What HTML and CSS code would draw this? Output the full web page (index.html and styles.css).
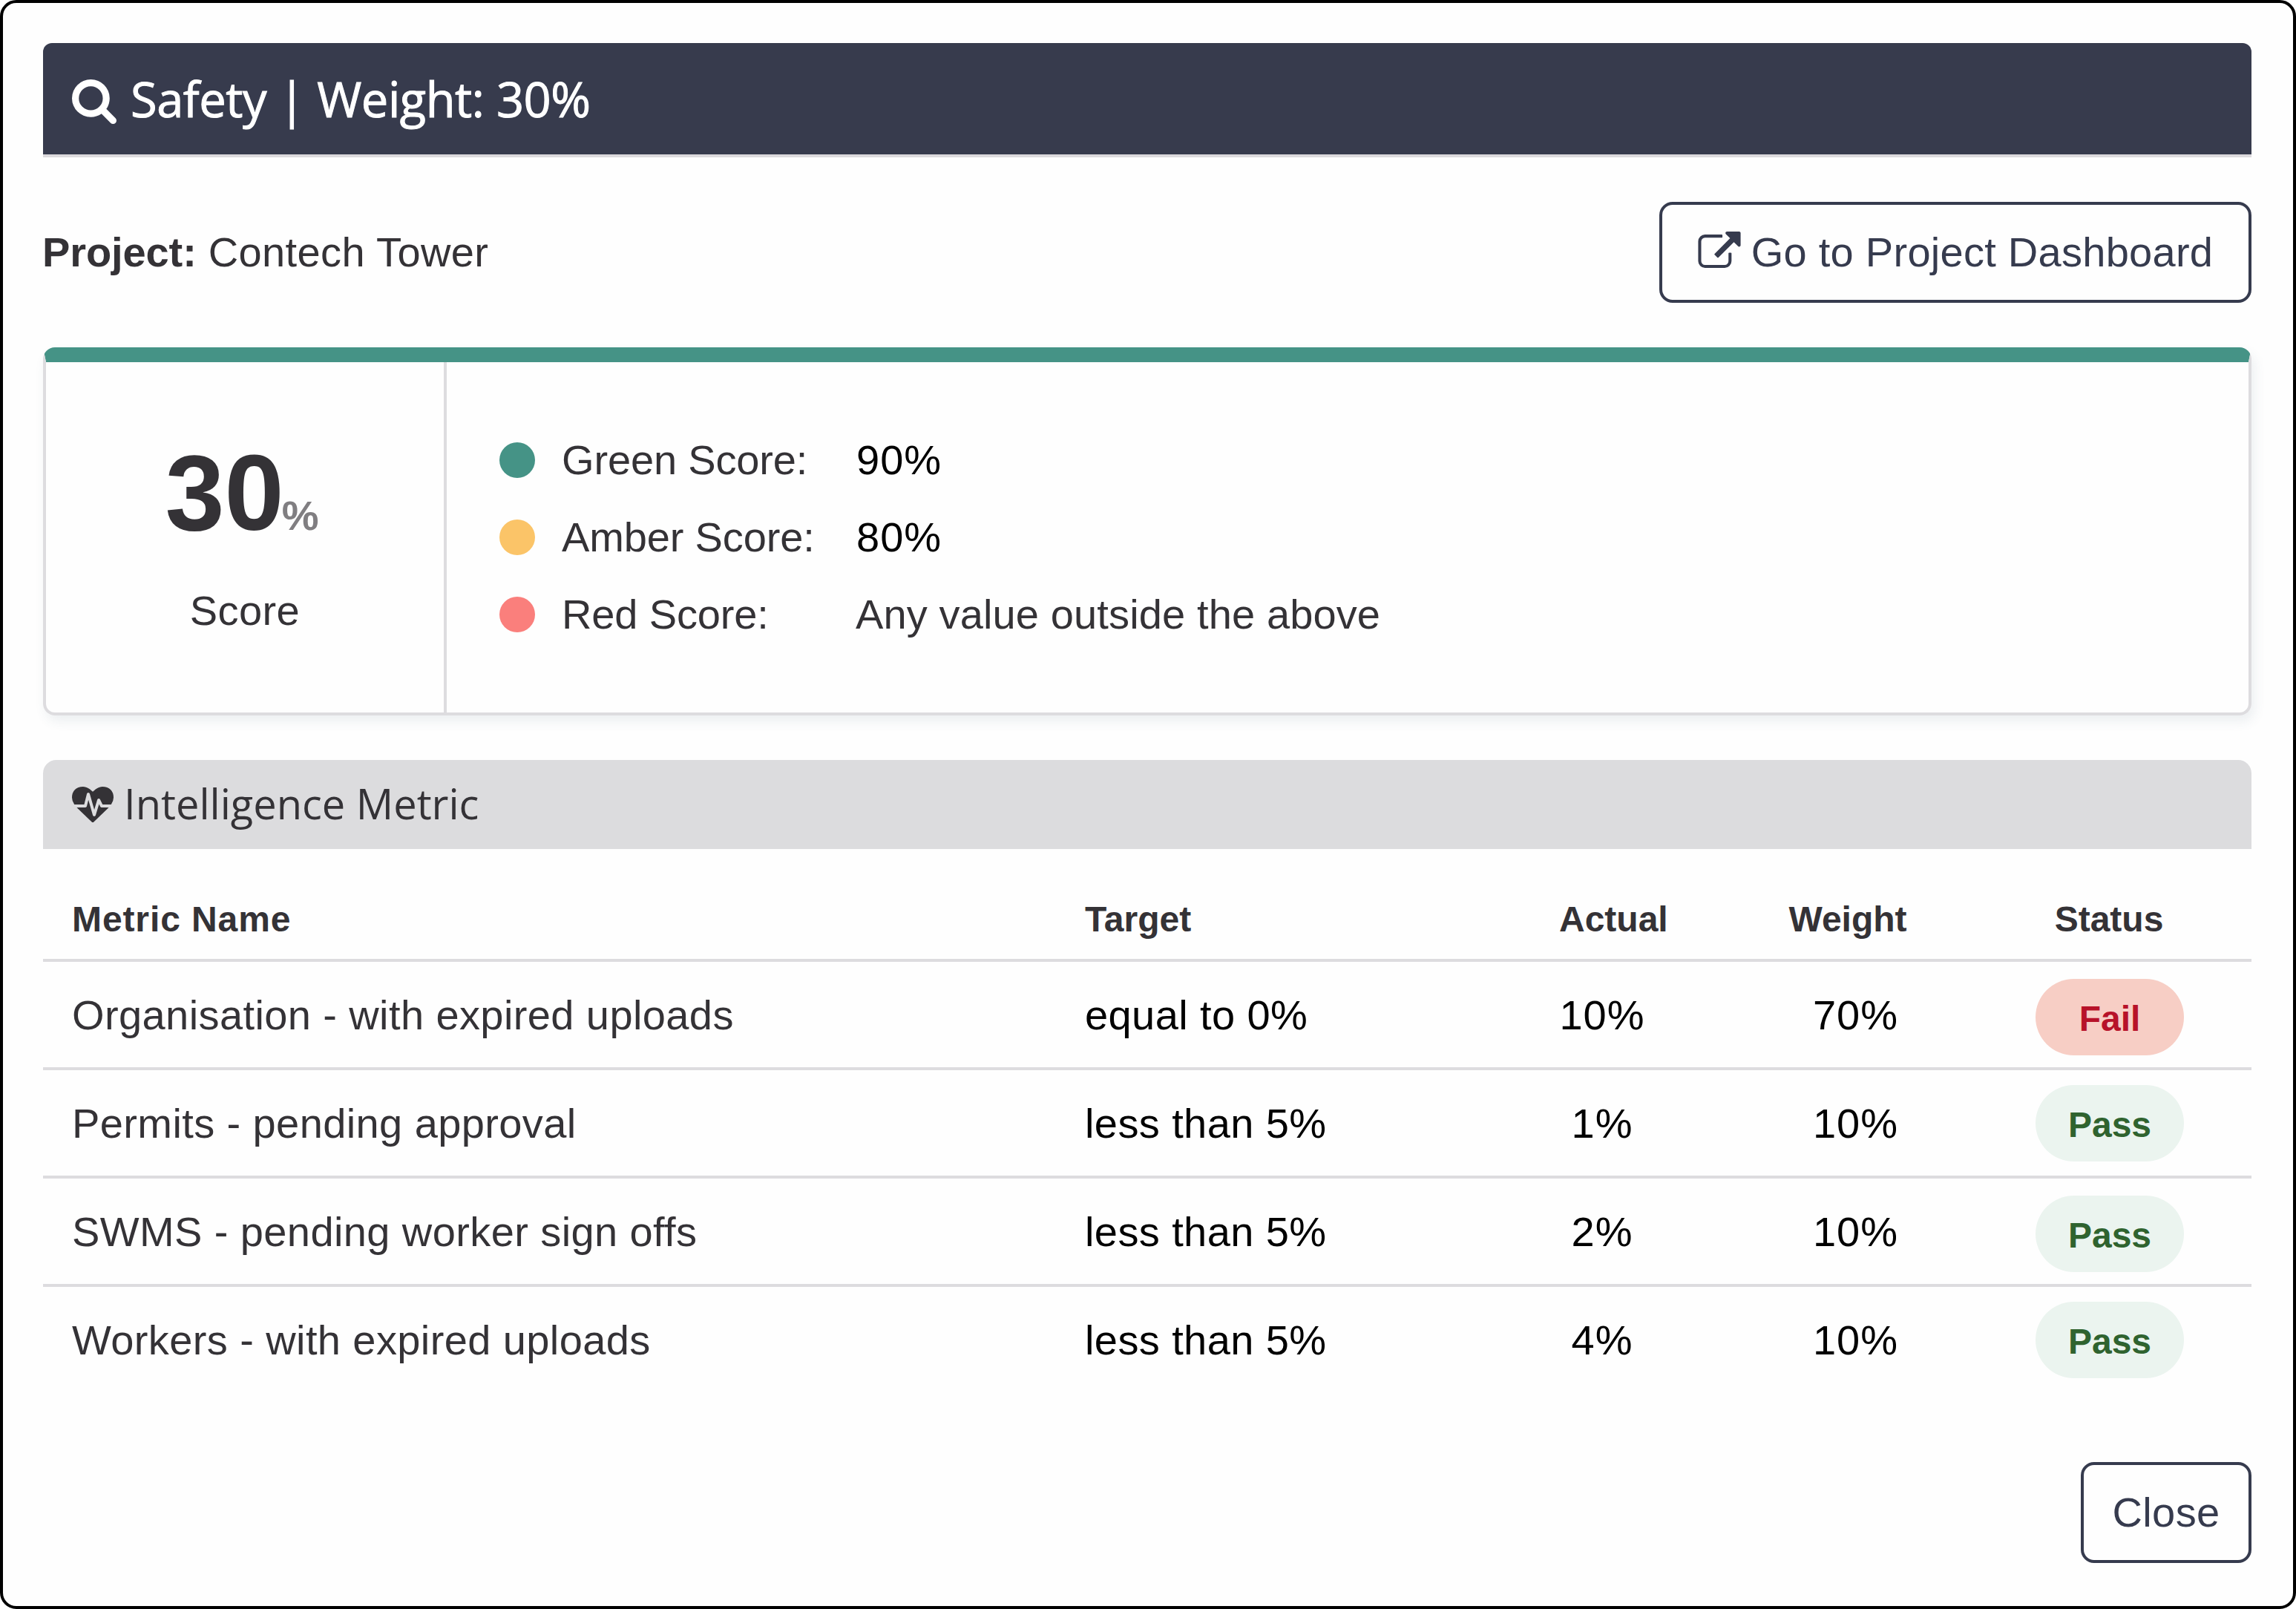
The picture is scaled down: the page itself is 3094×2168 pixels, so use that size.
FILE: index.html
```html
<!DOCTYPE html>
<html lang="en">
<head>
<meta charset="utf-8">
<title>Safety | Weight: 30%</title>
<link rel="stylesheet" href="styles.css">
</head>
<body>
<main class="dialog">
  <header class="dialog-header">
    <svg class="icon-search" viewBox="64 128 1664 1664" aria-hidden="true"><path d="M1216 832q0-185-131.500-316.500t-316.500-131.500-316.500 131.500-131.500 316.500 131.500 316.500 316.500 131.500 316.500-131.500 131.500-316.500zm512 832q0 52-38 90t-90 38q-54 0-90-38l-343-342q-179 124-399 124-143 0-273.500-55.500t-225-150-150-225-55.500-273.500 55.500-273.500 150-225 225-150 273.500-55.500 273.500 55.500 225 150 150 225 55.500 273.500q0 220-124 399l343 343q37 37 37 90z"/></svg>
    <h1 class="dialog-title">Safety | Weight: 30%</h1>
  </header>

  <section class="project-bar">
    <p class="project"><strong class="project-label">Project:</strong> Contech Tower</p>
    <button class="button button-dashboard" type="button">
      <svg class="icon-link" viewBox="0 0 1792 1536" aria-hidden="true"><path d="M1408 928v320q0 119-84.500 203.500t-203.500 84.500h-832q-119 0-203.500-84.500t-84.500-203.500v-832q0-119 84.500-203.500t203.500-84.500h704q14 0 23 9t9 23v64q0 14-9 23t-23 9h-704q-66 0-113 47t-47 113v832q0 66 47 113t113 47h832q66 0 113-47t47-113v-320q0-14 9-23t23-9h64q14 0 23 9t9 23zm384-864v512q0 26-19 45t-45 19-45-19l-176-176-652 652q-10 10-23 10t-23-10l-114-114q-10-10-10-23t10-23l652-652-176-176q-19-19-19-45t19-45 45-19h512q26 0 45 19t19 45z"/></svg>
      <span>Go to Project Dashboard</span>
    </button>
  </section>

  <section class="score-card">
    <div class="score">
      <div class="score-value">30<span class="score-unit">%</span></div>
      <div class="score-label">Score</div>
    </div>
    <div class="legend">
      <div class="legend-row"><span class="dot dot-green"></span><span class="legend-name">Green Score:</span><span class="value percent">90%</span></div>
      <div class="legend-row"><span class="dot dot-amber"></span><span class="legend-name">Amber Score:</span><span class="value percent">80%</span></div>
      <div class="legend-row"><span class="dot dot-red"></span><span class="legend-name">Red Score:</span><span class="legend-note">Any value outside the above</span></div>
    </div>
  </section>

  <section class="metrics">
    <header class="metrics-header">
      <svg class="icon-heart" viewBox="0 0 1792 1536" aria-hidden="true"><path d="M1280 896h305q-5 6-10 10.500t-9 7.500l-3 4-623 600q-18 18-44 18t-44-18l-624-602q-5-2-21-20h369q22 0 39.500-13.500t22.500-34.500l70-281 190 667q6 20 23 33t39 13q21 0 38-13t23-33l146-485 56 112q18 35 57 35zm512-428q0 145-103 300h-369l-111-221q-8-17-25.500-27t-36.500-8q-45 5-56 46l-129 430-196-686q-6-20-23.500-33t-39.500-13-39 13.500-22 34.500l-116 464h-423q-103-155-103-300 0-220 127-344t351-124q62 0 126.500 21.500t120 58 95.500 68.500 76 68q36-36 76-68t95.500-68.500 120-58 126.500-21.500q224 0 351 124t127 344z"/></svg>
      <h2 class="metrics-title">Intelligence Metric</h2>
    </header>
    <div class="table">
      <div class="row row-head">
        <div class="head-name">Metric Name</div><div>Target</div><div class="head-actual">Actual</div><div class="head-weight center">Weight</div><div class="center">Status</div>
      </div>
      <div class="row">
        <div>Organisation - with expired uploads</div><div class="value">equal to 0%</div><div class="value percent center">10%</div><div class="value percent center">70%</div><div class="pill pill-fail">Fail</div>
      </div>
      <div class="row">
        <div>Permits - pending approval</div><div class="value">less than 5%</div><div class="value percent center">1%</div><div class="value percent center">10%</div><div class="pill pill-pass pill-raised">Pass</div>
      </div>
      <div class="row">
        <div>SWMS - pending worker sign offs</div><div class="value">less than 5%</div><div class="value percent center">2%</div><div class="value percent center">10%</div><div class="pill pill-pass">Pass</div>
      </div>
      <div class="row">
        <div>Workers - with expired uploads</div><div class="value">less than 5%</div><div class="value percent center">4%</div><div class="value percent center">10%</div><div class="pill pill-pass pill-raised">Pass</div>
      </div>
    </div>
  </section>

  <footer class="dialog-footer">
    <button class="button button-close" type="button">Close</button>
  </footer>
</main>
</body>
</html>
```
FILE: styles.css
```css
* {
  box-sizing: border-box;
}

body {
  margin: 0;
  background: #fff;
  color: #343236;
  font-family: "Liberation Sans", Arial, Helvetica, sans-serif;
  font-size: 56px;
  line-height: 64px;
  letter-spacing: 0.4px;
}

h1, h2, p {
  margin: 0;
  font-weight: 400;
}

svg {
  display: block;
  flex: none;
  fill: currentColor;
}

.dialog {
  display: flex;
  flex-direction: column;
  width: 3094px;
  height: 2168px;
  padding: 54px 56px 58px 54px;
  border: 4px solid #000;
  border-radius: 22px;
  background: #fefefe;
}

.dialog-header {
  display: flex;
  align-items: center;
  gap: 19px;
  height: 154px;
  padding-left: 39px;
  border-bottom: 4px solid #dcdadd;
  border-radius: 12px 12px 0 0;
  background: #373b4d;
  color: #fff;
}

.icon-search {
  width: 60px;
  height: 60px;
  margin-top: 8px;
}

.dialog-title {
  font-family: "Open Sans", sans-serif;
  font-size: 65px;
  line-height: 80px;
  letter-spacing: -0.45px;
  -webkit-text-stroke: 1px currentColor;
}

.project-bar {
  display: flex;
  align-items: center;
  justify-content: space-between;
  margin-top: 60px;
}

.project {
  margin-left: -1px;
}

.project-label {
  font-weight: 700;
  letter-spacing: -0.1px;
}

.button {
  display: flex;
  align-items: center;
  justify-content: center;
  height: 136px;
  padding: 0;
  border: 4px solid #363b4e;
  border-radius: 18px;
  background: #fefefe;
  color: #363b4e;
  font: inherit;
  letter-spacing: inherit;
}

.button-dashboard {
  gap: 14px;
  width: 798px;
  letter-spacing: 0.27px;
}

.icon-link {
  width: 58px;
  height: 49px;
  margin-bottom: 8px;
}

.score-card {
  display: flex;
  height: 496px;
  margin-top: 60px;
  border: 4px solid #dddcdf;
  border-top: 20px solid #459386;
  border-radius: 16px;
  box-shadow: 4px 8px 16px rgba(60, 90, 110, 0.09);
}

.score {
  display: flex;
  flex-direction: column;
  align-items: center;
  justify-content: center;
  gap: 54px;
  width: 540px;
  border-right: 4px solid #dddcdf;
}

.score-value {
  padding-right: 8px;
  font-size: 144px;
  font-weight: 700;
  line-height: 144px;
  letter-spacing: 0;
}

.score-unit {
  margin-left: -3px;
  color: #807e81;
  font-size: 56px;
  line-height: 56px;
}

.legend {
  display: flex;
  flex-direction: column;
  justify-content: center;
  gap: 40px;
  padding-left: 71px;
}

.legend-row {
  display: grid;
  grid-template-columns: 84px 396px auto;
  align-items: center;
}

.legend-name {
  letter-spacing: -0.15px;
}

.legend-note {
  letter-spacing: 0.13px;
}

.dot {
  width: 48px;
  height: 48px;
  border-radius: 50%;
}

.dot-green { background: #459386; }
.dot-amber { background: #fbc468; }
.dot-red { background: #fa7f7c; }

.value {
  color: #000;
}

.percent {
  letter-spacing: 1px;
}

.legend-row .percent {
  padding-left: 1px;
}

.metrics {
  margin-top: 60px;
}

.metrics-header {
  display: flex;
  align-items: center;
  gap: 14px;
  height: 120px;
  padding-left: 39px;
  border-radius: 18px 18px 0 0;
  background: #dcdcde;
}

.icon-heart {
  width: 56px;
  height: 48px;
}

.metrics-title {
  padding-bottom: 5px;
  font-family: "Open Sans", sans-serif;
  font-size: 56px;
  line-height: 76px;
  letter-spacing: 0;
}

.row {
  display: grid;
  grid-template-columns: 1365px 597px 200px 483px 200px;
  align-items: center;
  height: 146px;
  padding: 2px 0 0 39px;
  border-bottom: 4px solid #dddcdf;
}

.row:last-child {
  border-bottom-color: transparent;
}

.row-head {
  height: 152px;
  padding-top: 42px;
  font-size: 48px;
  font-weight: 700;
  letter-spacing: 0;
}

.head-name {
  letter-spacing: 0.9px;
}

.head-actual {
  padding-left: 42px;
}

.head-weight {
  padding-right: 21px;
}

.center {
  text-align: center;
}

.pill {
  align-self: start;
  height: 103px;
  margin-top: 21px;
  margin-left: 1px;
  margin-right: -1px;
  padding-top: 4px;
  border-radius: 52px;
  font-size: 48px;
  font-weight: 700;
  line-height: 99px;
  letter-spacing: 0;
  text-align: center;
}

.pill-raised {
  margin-top: 18px;
}

.pill-fail {
  background: #f7cec5;
  color: #b71229;
}

.pill-pass {
  background: #ebf4ef;
  color: #2f632f;
}

.dialog-footer {
  display: flex;
  justify-content: flex-end;
  margin-top: auto;
}

.button-close {
  width: 230px;
}
```
